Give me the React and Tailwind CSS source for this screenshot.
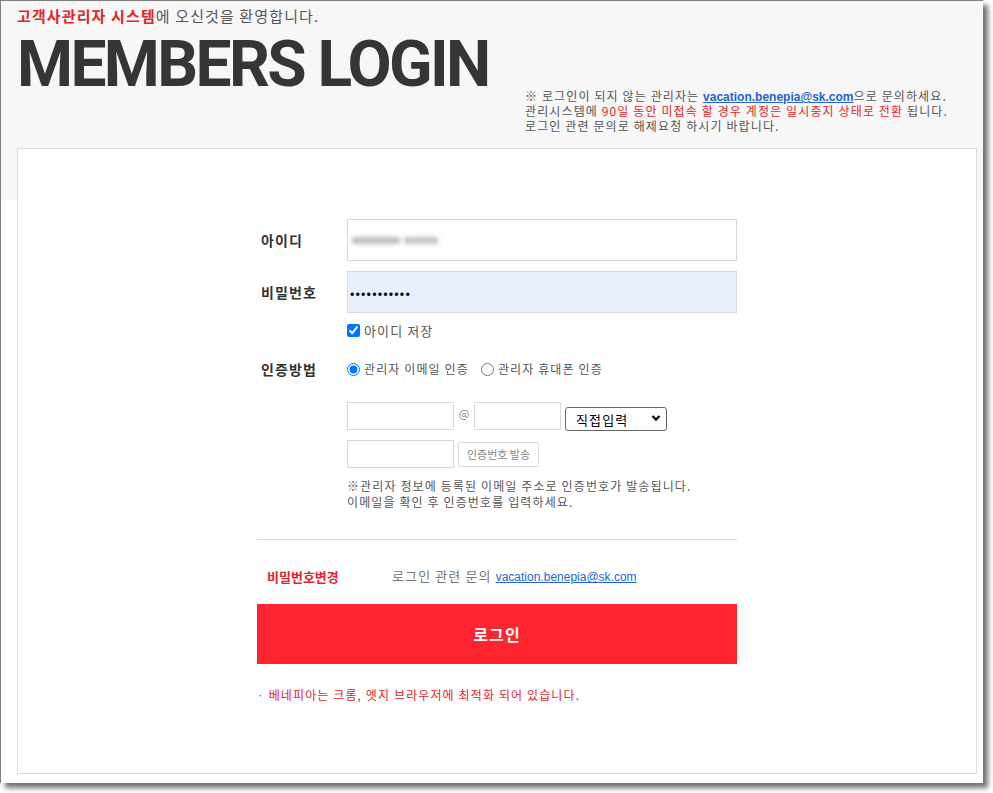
import { useState } from 'react';

const kr = { fontFamily: '"Noto Sans CJK KR", "Noto Sans", sans-serif' };
const latin = { fontFamily: '"Liberation Sans", Arial, sans-serif' };

const Field = ({ label, children, className = '' }) => (
  <div className={`flex items-center ${className}`}>
    <div className="w-[90px] pl-1 text-[14px] font-bold text-[#333]">{label}</div>
    <div className="flex-1">{children}</div>
  </div>
);

const App = () => {
  const [saveId, setSaveId] = useState(true);
  const [method, setMethod] = useState('email');

  return (
    <div className="w-[993px] h-[793px] bg-white tracking-[0.07em]" style={kr}>
      <div className="w-[983px] h-[783px] border-l border-t border-[#808080] shadow-[5px_5px_5px_rgba(0,0,0,0.55)] bg-[linear-gradient(to_bottom,#f7f7f7_199px,#ffffff_199px)]">
        {/* Header */}
        <div className="flex h-[147px] pl-4">
          <div className="pt-[4px]">
            <p className="text-[15px] leading-[22px] text-[#555]">
              <span className="font-bold text-[#e3242b]">고객사관리자 시스템</span>에 오신것을 환영합니다.
            </p>
            <h1
              className="mt-[6px] text-[64px] leading-[64px] font-bold tracking-[-2.6px] text-[#353535]"
              style={{ fontFamily: 'Roboto, "Liberation Sans", sans-serif' }}
            >
              MEMBERS LOGIN
            </h1>
          </div>
          <div className="ml-auto mr-[38px] w-[420px] self-end whitespace-nowrap pb-[15px] text-[12px] leading-[15px] text-[#555]">
            <p className="h-[15px]">
              ※ 로그인이 되지 않는 관리자는{' '}
              <a href="#" className="font-bold text-[#1f63d1] underline text-[12px] tracking-normal" style={latin}>
                vacation.benepia@sk.com
              </a>
              으로 문의하세요.
            </p>
            <p className="h-[15px]">
              관리시스템에{' '}
              <span className="text-[#e3242b]">90일 동안 미접속 할 경우 계정은 일시중지 상태로 전환</span> 됩니다.
            </p>
            <p className="h-[15px]">로그인 관련 문의로 해제요청 하시기 바랍니다.</p>
          </div>
        </div>

        {/* Card */}
        <div className="ml-4 w-[960px] h-[626px] border border-[#dcdcdc] bg-white pt-[70px]">
          <div className="mx-auto w-[480px]">
            <Field label="아이디">
              <div className="h-[42px] border border-[#d9d9d9] bg-white flex items-center px-[4px]">
                <span className="h-[7px] w-[48px] bg-[#bdbdbd] blur-[2px]" />
                <span className="ml-[4px] h-[7px] w-[34px] bg-[#c4c4c4] blur-[2px]" />
              </div>
            </Field>
            <Field label="비밀번호" className="mt-[10px]">
              <input
                type="password"
                readOnly
                value="12345678901"
                className="h-[42px] w-full border border-[#d3dbe6] bg-[#e8f0fe] px-[2px] text-[13px] text-black outline-none"
              />
            </Field>
            <label className="mt-[8px] ml-[90px] flex items-center gap-[4px] text-[13px] text-[#555]">
              <input
                type="checkbox"
                checked={saveId}
                onChange={() => setSaveId(!saveId)}
                className="m-0 h-[13px] w-[13px]"
              />
              아이디 저장
            </label>

            <Field label="인증방법" className="mt-[18px]">
              <div className="flex items-center text-[12px] text-[#555]">
                <label className="flex items-center gap-[4px]">
                  <input
                    type="radio"
                    name="m"
                    checked={method === 'email'}
                    onChange={() => setMethod('email')}
                    className="m-0 h-[13px] w-[13px]"
                  />
                  관리자 이메일 인증
                </label>
                <label className="ml-[12px] flex items-center gap-[4px]">
                  <input
                    type="radio"
                    name="m"
                    checked={method === 'phone'}
                    onChange={() => setMethod('phone')}
                    className="m-0 h-[13px] w-[13px]"
                  />
                  관리자 휴대폰 인증
                </label>
              </div>
            </Field>

            <div className="ml-[90px] mt-[22px] flex items-center">
              <input className="h-[28px] w-[107px] border border-[#d9d9d9] bg-white" />
              <span className="mx-[4px] w-[12px] text-center text-[11px] text-[#888] -mt-[6px] tracking-normal">@</span>
              <input className="h-[28px] w-[87px] border border-[#d9d9d9] bg-white" />
              <div className="relative ml-[4px] mt-[4px]">
                <select className="h-[24px] w-[102px] appearance-none rounded-[3px] border border-[#666] bg-white pl-[10px] text-[13px] text-black">
                  <option>직접입력</option>
                </select>
                <svg
                  className="pointer-events-none absolute right-[6px] top-[8px]"
                  width="10"
                  height="8"
                  viewBox="0 0 10 8"
                  fill="none"
                  stroke="#111"
                  strokeWidth="2.4"
                >
                  <path d="M1.5 2 L5 5.5 L8.5 2" />
                </svg>
              </div>
            </div>

            <div className="ml-[90px] mt-[9px] flex items-center">
              <input className="h-[28px] w-[107px] border border-[#d9d9d9] bg-white" />
              <button className="ml-[4px] h-[25px] w-[81px] rounded-[2px] border border-[#dcdcdc] bg-white text-[11px] text-[#888] tracking-normal">
                인증번호 발송
              </button>
            </div>

            <p className="ml-[90px] mt-[10px] text-[12px] leading-[16px] text-[#555]">
              ※관리자 정보에 등록된 이메일 주소로 인증번호가 발송됩니다.
              <br />
              이메일을 확인 후 인증번호를 입력하세요.
            </p>

            <div className="mt-[29px] border-t border-[#dcdcdc]" />

            <div className="mt-[26px] flex items-center text-[13px]">
              <span className="w-[135px] pl-[10px] font-bold text-[#e3242b] tracking-normal">비밀번호변경</span>
              <span className="text-[#777]">
                로그인 관련 문의{' '}
                <a href="#" className="text-[#1f63d1] underline text-[12px] tracking-normal" style={latin}>
                  vacation.benepia@sk.com
                </a>
              </span>
            </div>

            <button className="mt-[18px] h-[60px] w-full bg-[#fe2530] text-[16px] font-bold text-white">
              로그인
            </button>

            <p className="mt-[22px] text-[12px] text-[#e3242b]">· 베네피아는 크롬, 엣지 브라우저에 최적화 되어 있습니다.</p>
          </div>
        </div>
      </div>
    </div>
  );
};

export default App;
